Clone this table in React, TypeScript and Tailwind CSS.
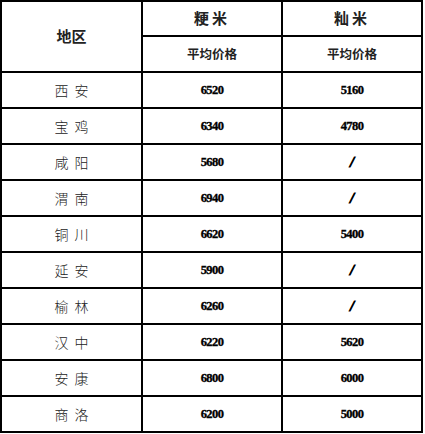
import React from "react";

const rows: [string, string, string][] = [
  ["西 安", "6520", "5160"],
  ["宝 鸡", "6340", "4780"],
  ["咸 阳", "5680", "/"],
  ["渭 南", "6940", "/"],
  ["铜 川", "6620", "5400"],
  ["延 安", "5900", "/"],
  ["榆 林", "6260", "/"],
  ["汉 中", "6220", "5620"],
  ["安 康", "6800", "6000"],
  ["商 洛", "6200", "5000"],
];

const cjk = "[font-family:'Noto_Sans_CJK_SC',sans-serif]";

function Val({ v }: { v: string }) {
  if (v === "/") {
    return (
      <div className="flex items-center justify-center bg-white text-[15px] font-bold italic text-black [-webkit-text-stroke:0.8px_black] [font-family:'Liberation_Serif',serif]">
        /
      </div>
    );
  }
  return (
    <div className="flex items-center justify-center bg-white text-[12.5px] font-bold tracking-[-0.6px] text-black [-webkit-text-stroke:0.35px_black] [font-family:'Liberation_Serif',serif]">
      {v}
    </div>
  );
}

export default function App() {
  return (
    <div className="bg-white w-[425px] h-[434px]">
      <div className="grid w-[423px] grid-cols-[139px_138px_138px] grid-rows-[33px_34px_repeat(10,34px)] gap-[2px] bg-black p-[2px]">
        <div className={`row-span-2 flex items-center justify-center bg-white text-[15px] font-bold text-[#222] ${cjk}`}>
          地区
        </div>
        <div className={`flex items-center justify-center bg-white text-[15px] font-bold tracking-[3px] text-[#222] ${cjk}`}>
          粳米
        </div>
        <div className={`flex items-center justify-center bg-white text-[15px] font-bold tracking-[3px] text-[#222] ${cjk}`}>
          籼米
        </div>
        <div className={`flex items-center justify-center bg-white text-[12.5px] font-bold text-[#222] ${cjk}`}>
          平均价格
        </div>
        <div className={`flex items-center justify-center bg-white text-[12.5px] font-bold text-[#222] ${cjk}`}>
          平均价格
        </div>
        {rows.map(([name, a, b]) => (
          <React.Fragment key={name}>
            <div className={`flex items-center justify-center whitespace-pre bg-white text-[14px] font-light text-[#222] ${cjk}`}>
              {name.replace(" ", "  ")}
            </div>
            <Val v={a} />
            <Val v={b} />
          </React.Fragment>
        ))}
      </div>
    </div>
  );
}
